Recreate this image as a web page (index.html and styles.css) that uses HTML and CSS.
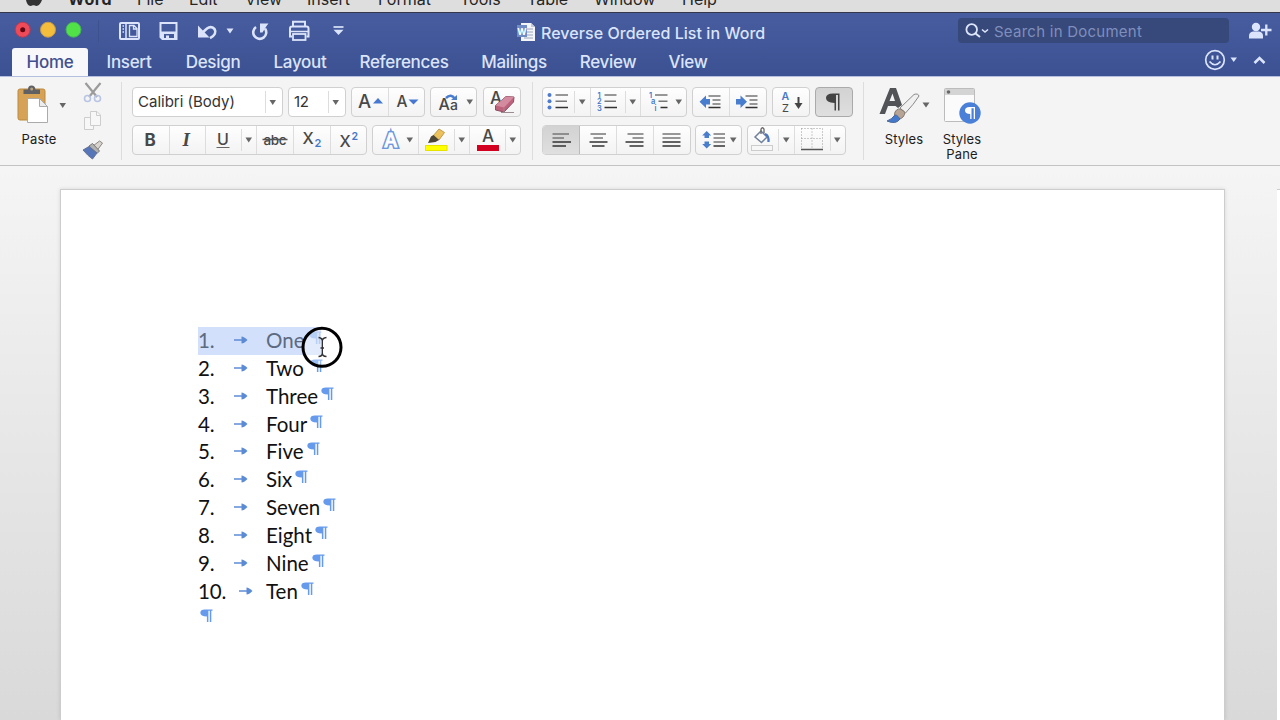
FILE: index.html
```html
<!DOCTYPE html>
<html lang="en">
<head>
    <meta charset="UTF-8">
    <meta name="viewport" content="width=device-width, initial-scale=1.0">
    <title>Reverse Ordered List in Word</title>
    <link rel="stylesheet" href="styles.css">
</head>
<body>
    <div class="menubar">
        <svg class="apple" width="68" height="12" viewBox="0 0 68 12"><path d="M26 0H42C41 3 38.500 6 36.500 6C35 6 34.500 5.300 33.500 5.300S32 6 30.500 6C28.500 6 26.500 3 26 0Z" fill="#333"/></svg>
        <b>Word</b><span>File</span><span>Edit</span><span>View</span><span>Insert</span><span>Format</span><span>Tools</span><span>Table</span><span>Window</span><span>Help</span>
    </div>

    <div class="header">
        <div class="titlebar">
            <div class="quick">
                <svg width="100" height="35" viewBox="0 13 100 35">
                    <g stroke-width="1"><circle cx="22.700" cy="29.700" r="7.500" fill="#ee4a58" stroke="#b63a56"/><circle cx="48" cy="29.700" r="7.500" fill="#f4bd3b" stroke="#c69b4c"/><circle cx="73.500" cy="29.700" r="7.500" fill="#50e247" stroke="#48ae5e"/></g>
                    <circle cx="22.700" cy="29.700" r="2.500" fill="#5e0713"/><path d="M98.500 20V42" stroke="#3c518e"/>
                </svg>
                <svg width="50" height="35" viewBox="100 13 50 35"><rect x="120" y="23" width="19" height="16" rx="1" fill="none" stroke="#dbe4fa" stroke-width="2"/><path d="M126 23V39M122.500 26H124M122.500 29H124M122.500 32H124" stroke="#dbe4fa" stroke-width="1.500"/><path d="M129.500 25.500H134L137 28.500V36.500H129.500ZM133.500 25.500V29H137" fill="none" stroke="#dbe4fa" stroke-width="1.300"/></svg>
                <svg width="37" height="35" viewBox="150 13 37 35"><path d="M160.500 23H176.500V39H162.500L160.500 37Z" fill="none" stroke="#dbe4fa" stroke-width="2"/><path d="M160 31.500H177V39.500H174V34H164V39.500H162L160 37Z" fill="#dbe4fa"/><rect x="166" y="35.500" width="3" height="4" fill="#dbe4fa"/></svg>
                <svg width="55" height="35" viewBox="187 13 55 35"><path d="M202 33L207 28.500Q211 25.500 214.500 29Q217.500 34 210 38.200" fill="none" stroke="#dbe4fa" stroke-width="2.600"/><path d="M198 25.500V37.500H209.500Z" fill="#dbe4fa"/><path d="M226.500 28.500H233.500L230 33.500Z" fill="#dbe4fa"/></svg>
                <svg width="37" height="35" viewBox="242 13 37 35"><path d="M256 27A6.500 6.500 0 1 0 265 28.500" fill="none" stroke="#dbe4fa" stroke-width="2.600"/><path d="M260 23.500H268.500L266.500 26L262.500 32.500H260Z" fill="#dbe4fa"/></svg>
                <svg width="41" height="35" viewBox="279 13 41 35"><path d="M293 26V21.700H305V26M292 36.500H290V28.500Q290 26.500 292 26.500H306.500Q308.500 26.500 308.500 28.500V36.500H306.500" fill="none" stroke="#dbe4fa" stroke-width="2"/><path d="M290 31.500H309" stroke="#dbe4fa" stroke-width="1.500"/><rect x="293" y="34" width="12.500" height="6" fill="#425798" stroke="#dbe4fa" stroke-width="1.800"/></svg>
                <svg width="40" height="35" viewBox="320 13 40 35"><path d="M333.500 27H343.500" stroke="#dbe4fa" stroke-width="1.700"/><path d="M333.500 29.700H343.500L338.500 35Z" fill="#dbe4fa"/></svg>
            </div>
            <div class="doc_title">
                <svg width="20" height="20" viewBox="516 22 20 20"><path d="M521 22H531L535 26V40H521Z" fill="#f4f5f8"/><path d="M531 22V26H535" fill="#c5cad8"/><path d="M527 28H533M527 31H533M527 34H533M524 37H533" stroke="#9ba4ba"/><rect x="517" y="24" width="10" height="12" fill="#6f8cc5"/><text x="517.300" y="33.500" font-size="9" font-weight="700" fill="#fff">W</text></svg>
                <span>Reverse Ordered List in Word</span>
            </div>
            <div class="search">
                <svg width="36" height="25" viewBox="958 18 36 25"><circle cx="971.700" cy="29.500" r="5.300" fill="none" stroke="#dde5fa" stroke-width="1.800"/><path d="M975.500 33.500L980 37" stroke="#dde5fa" stroke-width="2"/><path d="M982 29.500L985 32L988 29.500" fill="none" stroke="#dde5fa" stroke-width="1.600"/></svg>
                <span>Search in Document</span>
            </div>
            <svg class="share" width="40" height="35" viewBox="1240 13 40 35"><circle cx="1256" cy="27" r="4.200" fill="#dbe4fa"/><path d="M1249 38.500V36Q1249 32 1253 31.500H1259Q1263 32 1263 36V38.500Z" fill="#dbe4fa"/><path d="M1261 30H1271.500M1266.300 24.500V35.500" stroke="#dbe4fa" stroke-width="2.300"/></svg>
        </div>
        <div class="tabs">
            <div class="tab active">Home</div><div class="tab">Insert</div><div class="tab">Design</div><div class="tab">Layout</div><div class="tab">References</div><div class="tab">Mailings</div><div class="tab">Review</div><div class="tab">View</div>
            <svg class="tab_tools" width="80" height="28" viewBox="1200 48 80 28"><circle cx="1215" cy="60" r="9.300" fill="none" stroke="#dbe4fa" stroke-width="1.700"/><path d="M1212.500 55.500V59.500M1217.500 55.500V59.500" stroke="#dbe4fa" stroke-width="2"/><path d="M1209.500 61.500Q1215 68 1220.500 61.500" fill="none" stroke="#dbe4fa" stroke-width="1.700"/><path d="M1230.500 57.500H1237L1233.700 62Z" fill="#dbe4fa"/><path d="M1254.500 63L1259.500 58L1264.500 63" fill="none" stroke="#dbe4fa" stroke-width="2.600"/></svg>
        </div>
    </div>

    <div class="ribbon">
        <div class="clipboard">
            <div class="paste">
                <svg width="62" height="42" viewBox="10 84 62 42"><rect x="18" y="89" width="27" height="31" rx="2" fill="#d6a256" stroke="#bd8a3c"/><path d="M23.500 94V89.500H28Q28 85.500 31.500 85.500T35.500 89.500H40V94Z" fill="#5f6063"/><circle cx="31.700" cy="89" r="1.500" fill="#b8a27c"/><path d="M27.500 98.500H39.500L47.500 106.500V122.500H27.500Z" fill="#fff" stroke="#aaa"/><path d="M39.500 98.500V106.500H47.500Z" fill="#ececec" stroke="#aaa"/><path class="caret" d="M59.500 103H66L62.700 108Z"/></svg>
                <div class="label">Paste</div>
            </div>
            <svg width="38" height="84" viewBox="76 81 38 84">
                <path d="M85.500 83L97 97M100.500 83L89 97" stroke="#9b9b9b" stroke-width="2.200"/><circle cx="87.500" cy="98.500" r="3" fill="none" stroke="#b7c4e4" stroke-width="1.600"/><circle cx="97.500" cy="98.500" r="3" fill="none" stroke="#b7c4e4" stroke-width="1.600"/>
                <g fill="#f7f7f7" stroke="#cdcdcd"><path d="M84.500 117.500H93.500V129.500H84.500Z"/><path d="M90.500 111.500H97L100.500 115V125.500H90.500Z"/><path d="M96.500 111.500V115.500H100.500" fill="none"/></g>
                <path d="M93 146L99.500 141L102.500 143L97.500 150Z" fill="#d9d4cd" stroke="#8c8883"/><path d="M89 146L92.500 143.500L99.500 151L97 153.500Z" fill="#b2b2b2" stroke="#777"/><path d="M83 150L89 146.500L97 153L92.500 159Q88 156 83 150Z" fill="#5775b9" stroke="#667292"/>
            </svg>
        </div>

        <div class="group font_group">
            <div class="row">
                <div class="combo font_name"><span>Calibri (Body)</span><svg width="17" height="28" viewBox="0 0 17 28"><path d="M.5 3V25" stroke="#ddd"/><path class="caret" d="M4.500 12H11L7.700 17Z"/></svg></div>
                <div class="combo font_size"><span>12</span><svg width="17" height="28" viewBox="0 0 17 28"><path d="M.5 3V25" stroke="#ddd"/><path class="caret" d="M4.500 12H11L7.700 17Z"/></svg></div>
                <div class="buttons grow_shrink">
                    <svg viewBox="352 88 36 28"><text x="358" y="108" font-size="18.500" font-weight="500">A</text><path d="M373 103.500L378 98L383 103.500Z" fill="#4678d2"/></svg>
                    <svg viewBox="388 88 36 28"><path class="line" d="M388.500 88V116"/><text x="396.500" y="107" font-size="15.500" font-weight="500">A</text><path d="M408.500 99.500H418.500L413.500 104.500Z" fill="#4678d2"/></svg>
                </div>
                <div class="buttons change_case">
                    <svg viewBox="431 88 45 28"><text x="438.500" y="109.500" font-size="16" font-weight="500">A</text><text x="450" y="109.500" font-size="14" font-weight="500">a</text><path d="M446 98Q451 93 455 99" fill="none" stroke="#4b7dce" stroke-width="2.500"/><path d="M451 100H457V95Z" fill="#4b7dce"/><path class="caret" d="M466.500 99.500H473L469.700 104.500Z"/></svg>
                </div>
                <div class="buttons clear">
                    <svg viewBox="484 88 36 28"><text x="490" y="104" font-size="17" font-weight="500">A</text><path d="M495.500 105.500L506 96.500L514 97L513.500 102L504 112L495.500 110Z" fill="#be617d" stroke="#8c4d60"/><path d="M495.500 105.500L504 107.500L514 97L506 96.500Z" fill="#d38ba0"/><path d="M504 108V112M501 112.500H514" stroke="#9c8b91"/></svg>
                </div>
            </div>
            <div class="row">
                <div class="buttons styles_row">
                    <svg viewBox="133 126 36 28"><text x="144.500" y="146" font-size="17" font-weight="700">B</text></svg>
                    <svg viewBox="169 126 36 28"><path class="line" d="M169.500 126V154"/><text class="serif" x="182.500" y="146" font-size="19" font-weight="700" font-style="italic">I</text></svg>
                    <svg viewBox="205 126 51 28"><path class="line" d="M205.500 126V154M241.500 129V151"/><text x="217" y="145" font-size="16" font-weight="500">U</text><path d="M216.500 147.500H229.500" stroke="#666"/><path class="caret" d="M245.500 137.500H252L248.700 142.500Z"/></svg>
                    <svg viewBox="256 126 37 28"><path class="line" d="M256.500 126V154"/><text x="263.500" y="144.500" font-size="13.500" textLength="23" font-weight="500">abc</text><path d="M262.500 139.500H287.500" stroke="#555" stroke-width="1.300"/></svg>
                    <svg viewBox="293 126 37 28"><path class="line" d="M293.500 126V154"/><text x="302.500" y="144" font-size="16" font-weight="500">X</text><text class="blue" x="314.500" y="147" font-size="11" font-weight="600">2</text></svg>
                    <svg viewBox="330 126 36 28"><path class="line" d="M330.500 126V154"/><text x="339.500" y="147" font-size="16" font-weight="500">X</text><text class="blue" x="351.500" y="139.500" font-size="10.500" font-weight="600">2</text></svg>
                </div>
                <div class="buttons color_row">
                    <svg viewBox="373 126 45 28"><text class="halo" x="384" y="146.500" font-size="19" font-weight="500">A</text><text class="outline" x="384" y="146.500" font-size="19" font-weight="500">A</text><path class="caret" d="M406.500 137.500H413L409.700 142.500Z"/></svg>
                    <svg viewBox="418 126 51 28"><path class="line" d="M418.500 126V154M454.500 129V151"/><path d="M433 136L439 129L444.500 132.500L439 140Z" fill="#ecc05b" stroke="#c29b4f"/><path d="M428 143L431 136.500L433.500 135L439 140L435.500 142Z" fill="#4d4637"/><rect x="425.500" y="145.500" width="21.500" height="5" fill="#ff0" stroke="#e6e300"/><path class="caret" d="M458.500 137.500H465L461.700 142.500Z"/></svg>
                    <svg viewBox="469 126 51 28"><path class="line" d="M469.500 126V154M505.500 129V151"/><text x="482" y="142" font-size="17" font-weight="500">A</text><rect x="477" y="145" width="22" height="6" fill="#d4001f"/><path class="caret" d="M509.500 137.500H516L512.700 142.500Z"/></svg>
                </div>
            </div>
        </div>

        <div class="group para_group">
            <div class="row">
                <div class="buttons lists">
                    <svg viewBox="543 88 47 28"><path class="line" d="M574.500 91V113"/><g fill="#4e7bd0"><circle cx="549.500" cy="95" r="2"/><circle cx="549.500" cy="101.200" r="2"/><circle cx="549.500" cy="107.500" r="2"/></g><path class="bar" d="M555.500 95H568M555.500 101.200H567"/><path class="bar dark" d="M555.500 107.500H568"/><path class="caret" d="M579 99.500H585.500L582.200 104.500Z"/></svg>
                    <svg viewBox="590 88 50 28"><path class="line" d="M590.500 88V116M625.500 91V113"/><g class="blue" font-size="7.500" font-weight="600"><text x="597.500" y="97.500">1</text><text x="597" y="104">2</text><text x="597" y="110.800">3</text></g><path class="bar" d="M604.500 95H616.500M604.500 101.200H616"/><path class="bar dark" d="M604.500 107.500H617"/><path class="caret" d="M629.500 99.500H636L632.700 104.500Z"/></svg>
                    <svg viewBox="640 88 46 28"><path class="line" d="M640.500 88V116"/><g class="blue" font-size="7.500" font-weight="600"><text x="649" y="97.500">1</text><text x="651" y="104">a</text><text x="654.500" y="110.500">i</text></g><path class="bar" d="M655 95H667.500M658.500 101.200H667.500"/><path class="bar dark" d="M660.500 107.500H667.500"/><path class="caret" d="M675.500 99.500H682L678.700 104.500Z"/></svg>
                </div>
                <div class="buttons indents">
                    <svg viewBox="693 88 36 28"><path d="M699.500 101.700L706 95.500V99H710V104.500H706V108Z" fill="#497dce"/><path class="bar" d="M708.500 96H720.500M712.500 100H720.500M712.500 104H720.500"/><path class="bar dark" d="M708.500 107.500H720.500"/></svg>
                    <svg viewBox="729 88 37 28"><path class="line" d="M729.500 88V116"/><path d="M747 101.700L740.500 95.500V99H736V104.500H740.500V108Z" fill="#497dce"/><path class="bar" d="M745.500 96H757.500M749.500 100H757.500M749.500 104H757.500"/><path class="bar dark" d="M745.500 107.500H757.500"/></svg>
                </div>
                <div class="buttons sort">
                    <svg viewBox="773 88 36 28"><text class="blue" x="781.500" y="100" font-size="10.500" font-weight="600">A</text><text x="782" y="112" font-size="11">Z</text><path d="M798.500 97V106" stroke="#444" stroke-width="2"/><path d="M794.500 103H802.500L798.500 109Z" fill="#444"/></svg>
                </div>
                <div class="buttons marks pressed">
                    <svg viewBox="816 88 36 28"><path d="M839.500 93.500V110.500H838V95H836V110.500H834.500V103Q826 102.500 826 98T833 93.500Z" fill="#444"/></svg>
                </div>
            </div>
            <div class="row para_row">
                <div class="buttons aligns">
                    <svg class="pressed" viewBox="543 126 37 28"><path class="line" d="M579.500 126V154" style="stroke:#bbb"/><path class="bar" d="M552.500 134H569M552.500 138H564"/><path class="bar dark" d="M552.500 142H571M552.500 146H566"/></svg>
                    <svg viewBox="580 126 36 28"><path class="bar" d="M590.500 134H606M593.500 138H603"/><path class="bar dark" d="M589.500 142H607.500M592 146H604.500"/></svg>
                    <svg viewBox="616 126 37 28"><path class="line" d="M616.500 126V154"/><path class="bar" d="M627.500 134H643.500M632.500 138H643.500"/><path class="bar dark" d="M625.500 142H643.500M629.500 146H643.500"/></svg>
                    <svg viewBox="653 126 37 28"><path class="line" d="M653.500 126V154"/><path class="bar" d="M662.500 134H680.500M662.500 138H680.500"/><path class="bar dark" d="M662.500 142H680.500M662.500 146H680.500"/></svg>
                </div>
                <div class="buttons spacing">
                    <svg viewBox="697 126 45 28"><path d="M707.700 131L712.200 135.500H710V138H705.500V135.500H703.200ZM707.700 148.500L712.200 144H710V141.500H705.500V144H703.200Z" fill="#497dce"/><path class="bar" d="M714.500 134H726M714.500 138H726M714.500 142H726"/><path class="bar dark" d="M714.500 146H726"/><path class="caret" d="M731 137.500H737.500L734.200 142.500Z"/></svg>
                </div>
                <div class="buttons borders">
                    <svg viewBox="749 126 46 28"><path class="line" d="M779.500 129V151"/><path d="M756 137L762 131L768 137L762.500 142.500Z" fill="#fbfbfb" stroke="#70809b" stroke-width="1.500"/><path d="M762 134V129Q763.500 126.500 765 129V133" fill="none" stroke="#666" stroke-width="1.300"/><path d="M766 134Q770 135 769.500 142" fill="none" stroke="#4977c6" stroke-width="2.300"/><rect x="752.500" y="145.500" width="21" height="5" fill="#f7f7f7" stroke="#ccc"/><path class="caret" d="M784 137.500H790.500L787.200 142.500Z"/></svg>
                    <svg viewBox="795 126 51 28"><path class="line" d="M795.500 126V154M831.500 129V151"/><path d="M802.500 128.500H823.500V148M802.500 128.500V148M813 128.500V148M802.500 138.500H823.500" fill="none" stroke="#999" stroke-dasharray="1 2"/><path d="M802 149.500H824" stroke="#555" stroke-width="1.500"/><path class="caret" d="M835 137.500H841.500L838.200 142.500Z"/></svg>
                </div>
            </div>
        </div>

        <div class="style_group">
            <div class="style_item styles_button">
                <svg width="56" height="46" viewBox="876 84 56 46"><path d="M879.500 114L890 88H896L902 105L898 108L895.500 106H888L885 114ZM889.500 101H895L892.500 93.500Z" fill="#515356"/><path d="M900 108L914 94.500Q918 93 919 96Q914 104 905.500 113Z" fill="#f0f0f0" stroke="#888"/><path d="M895 112Q898 107 902 110Q907 112 903 117Q899 121 894 118Z" fill="#b6a495" stroke="#827870"/><path d="M887 121Q892 119 894 116Q896 113 900 119Q896 125 887 121Z" fill="#4378cb" stroke="#4c6b9d"/><path class="caret" d="M922.500 102.500H929.500L926 107.500Z"/></svg>
                <div class="label">Styles</div>
            </div>
            <div class="style_item pane_button">
                <svg width="46" height="46" viewBox="940 84 46 46"><rect x="945.500" y="88.500" width="30" height="33" rx="1" fill="#fbfbfb" stroke="#bcbcbc"/><path d="M946 89H975V95H946Z" fill="#d4d4d4"/><circle cx="949.500" cy="92" r="1.800" fill="#686868"/><circle cx="971" cy="113" r="10.700" fill="#4a80d7"/><path d="M976 107V119H974.700V108.300H972.500V119H971.200V114Q966 113.700 966 110.500T970.500 107Z" fill="#fff"/></svg>
                <div class="label">Styles<br>Pane</div>
            </div>
        </div>
    </div>

    <div class="workspace">
        <div class="page">
            <ol class="list">
                <li class="selected"><b>1.</b><i></i><span>One</span><em></em></li>
                <li class="two"><b>2.</b><i></i><span>Two</span><em></em></li>
                <li><b>3.</b><i></i><span>Three</span><em></em></li>
                <li><b>4.</b><i></i><span>Four</span><em></em></li>
                <li><b>5.</b><i></i><span>Five</span><em></em></li>
                <li><b>6.</b><i></i><span>Six</span><em></em></li>
                <li><b>7.</b><i></i><span>Seven</span><em></em></li>
                <li><b>8.</b><i></i><span>Eight</span><em></em></li>
                <li><b>9.</b><i></i><span>Nine</span><em></em></li>
                <li class="ten"><b>10.</b><i></i><span>Ten</span><em></em></li>
                <li class="empty"><em></em></li>
            </ol>
        </div>
        <div class="next_page"></div>
    </div>
    <svg class="pointer" width="44" height="44" viewBox="300 325 44 44"><circle cx="322" cy="347.300" r="19" fill="#fff" fill-opacity=".35" stroke="#000" stroke-width="3"/><path d="M318.500 337.500Q322.300 338 322.300 341Q322.300 338 326.500 337.500M322.300 340V354M318.500 356.500Q322.300 356.500 322.300 353Q322.300 356.500 326.500 356.500M320.500 348H324" fill="none" stroke="#333" stroke-width="1.400"/></svg>

    <script>
        // arrow for each tab stop, pilcrow for each paragraph end
        document.querySelectorAll('.list i').forEach(function(el){
            el.innerHTML = '<svg width="14" height="10" viewBox="0 0 14 10"><path d="M0 5H9" stroke="#5c8bd6" stroke-width="1.500"/><path d="M7.500 1.500Q10 1.500 13.500 5Q10 8.500 7.500 8.500Z" fill="#5c8bd6"/></svg>';
        });
        document.querySelectorAll('.list em').forEach(function(el){
            el.innerHTML = '<svg width="13" height="14" viewBox="0 0 13 14"><path d="M12.500 .5V1.700H11.300V13H9.800V1.700H8.400V13H6.900V7.500Q.3 7.500 .3 3.800T6 .5Z" fill="#659aed"/></svg>';
        });
    </script>
</body>
</html>
```
FILE: styles.css
```css
*{
    box-sizing: border-box;
}
body{
    margin: 0;
    width: 1280px;
    height: 720px;
    overflow: hidden;
    font-family: Inter, "Liberation Sans", sans-serif;
    white-space: nowrap;
}
svg{
    display: block;
    flex: none;
}
.menubar{
    display: grid;
    grid-template-columns: 68px 69px 52px 56px 62px 71px 82px 67px 67px 88px 80px;
    height: 13px;
    background: #dedede;
    border-bottom: 1px solid #34384a;
    overflow: hidden;
    font-size: 16px;
    line-height: 20px;
    color: #252525;
}
.menubar b, .menubar span{
    margin-top: -11px;
}
.menubar b{
    letter-spacing: .6px;
}

/* blue window header */
.header{
    height: 63px;
    background: linear-gradient(#475d9f, #3b5192);
    color: #dbe4fa;
}
.titlebar{
    display: flex;
    height: 35px;
}
.quick{
    display: flex;
    width: 516px;
}
.doc_title{
    display: flex;
    align-items: center;
    gap: 5px;
    width: 442px;
    padding-top: 4px;
    font-size: 16px;
    font-weight: 500;
    letter-spacing: .05px;
}
.search{
    display: flex;
    align-items: center;
    width: 271px;
    height: 25px;
    margin-top: 5px;
    border-radius: 4px;
    background: #37487a;
    color: #7f8fbd;
    font-size: 15px;
    letter-spacing: .25px;
}
.search span{
    padding-top: 2px;
}
.share{
    margin-left: 11px;
}
.tabs{
    display: grid;
    grid-template-columns: 76px 82px 86px 88px 120px 100px 88px 72px 1fr;
    height: 28px;
    padding-left: 12px;
}
.tab{
    text-align: center;
    font-size: 17px;
    line-height: 28px;
    font-weight: 500;
    letter-spacing: -.3px;
}
.tab.active{
    border-radius: 3px 3px 0 0;
    background: #f8f8fb;
    color: #42508f;
}
.tab_tools{
    justify-self: end;
}

/* ribbon */
.ribbon{
    display: flex;
    height: 90px;
    padding-left: 10px;
    background: #f4f4f4;
    border-top: 1px solid #b4bfe0;
    border-bottom: 1px solid #c4c4c4;
}
.ribbon text{
    fill: #484848;
}
.ribbon text.blue, .ribbon .blue text{
    fill: #4777ca;
}
.ribbon text.serif{
    font-family: "Liberation Serif", serif;
}
.ribbon text.halo{
    fill: none;
    stroke: #6d98db;
    stroke-width: 4;
}
.ribbon text.outline{
    fill: #fff;
    stroke: #fff;
    stroke-width: .8;
}
.caret{
    fill: #666;
}
.line{
    stroke: #ddd;
}
.bar{
    stroke: #777;
    stroke-width: 1.4;
}
.bar.dark{
    stroke: #333;
}
.clipboard{
    display: flex;
    width: 112px;
    padding-top: 4px;
    background: linear-gradient(#ddd, #ddd) right 5px / 1px 78px no-repeat;
}
.paste{
    width: 66px;
    padding-top: 3px;
}
.label{
    font-size: 13px;
    line-height: 15px;
    text-align: center;
    color: #1d1d1d;
    letter-spacing: .15px;
}
.paste .label{
    width: 58px;
    margin-top: 6px;
}
.group{
    display: flex;
    flex-direction: column;
    gap: 8px;
    padding: 10px 0 0 10px;
    background: linear-gradient(#ddd, #ddd) right 5px / 1px 78px no-repeat;
}
.font_group{
    width: 411px;
}
.para_group{
    width: 331px;
    padding-left: 9px;
}
.row{
    display: flex;
    gap: 5px;
}
.para_row{
    gap: 4px;
}
.combo, .buttons{
    display: flex;
    height: 30px;
    border: 1px solid #d0d0d0;
    border-radius: 4px;
    background: linear-gradient(#fefefe, #f3f3f3);
    overflow: hidden;
}
.combo{
    justify-content: space-between;
    padding-left: 5px;
    background: #fff;
    font-size: 15px;
    line-height: 28px;
    color: #333;
}
.font_name{
    width: 151px;
}
.font_size{
    width: 58px;
}
.font_size span{
    letter-spacing: -.3px;
}
.buttons svg{
    height: 28px;
}
.clear{
    margin-left: 1px;
}
.buttons.pressed, .buttons .pressed{
    background: linear-gradient(#d2d2d2, #dfdfdf);
}
.buttons.marks{
    border-color: #aaa;
}
.spacing, .borders{
    margin-left: 1px;
}
.spacing{
    margin-left: 0;
}
.style_group{
    display: flex;
    gap: 7px;
    padding: 7px 0 0 12px;
}
.style_item .label{
    margin-top: 2px;
}

/* document area */
.workspace{
    display: flex;
    justify-content: space-between;
    height: 554px;
    padding: 23px 0 0 60px;
    background: linear-gradient(#f5f5f5, #d9d9d9);
}
.page{
    width: 1165px;
    background: #fff;
    border: 1px solid #cdcdcd;
    border-bottom: 0;
    box-shadow: 0 0 4px rgba(0,0,0,.12);
}
.next_page{
    width: 3px;
    background: #fff;
    border-top: 1px solid #cdcdcd;
}
.list{
    margin: 137px 0 0 137px;
    padding: 0;
    list-style: none;
    font-family: Lato, "Open Sans", sans-serif;
    font-size: 20.5px;
    line-height: 26px;
    color: #111;
}
.list li{
    display: flex;
    height: 27.87px;
}
.list b{
    flex: none;
    width: 36px;
    font-weight: 400;
    letter-spacing: -.2px;
}
.list i{
    flex: none;
    width: 32px;
    padding-top: 8px;
}
.list em{
    padding: 4px 0 0 3px;
}
.list .two em{
    padding-left: 6px;
}
.list .ten b{
    width: 41px;
}
.list .ten i{
    width: 27px;
}
.list .selected{
    width: 123px;
    background: #d3e0fb;
    color: #5c6a82;
}
.list .selected em{
    padding-left: 5px;
    opacity: .6;
}
.list .empty em{
    padding: 3px 0 0 2px;
}
.pointer{
    position: absolute;
    left: 300px;
    top: 325px;
}
```
